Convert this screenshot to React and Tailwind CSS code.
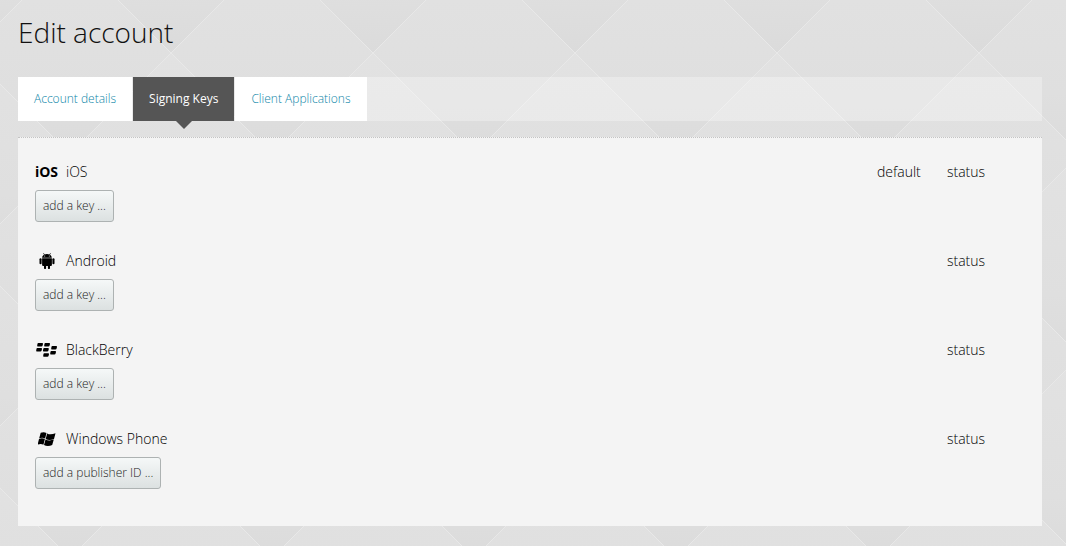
import React from "react";

const TABS = [
  { label: "Account details", active: false },
  { label: "Signing Keys", active: true },
  { label: "Client Applications", active: false },
];

function IosIcon() {
  return <span aria-hidden="true" className="text-sm leading-6 font-bold text-black">iOS</span>;
}

function AndroidIcon() {
  return (
    <svg aria-hidden="true" width="16" height="16" viewBox="0 0 16 16" fill="#000">
      <path d="M4.2.4l.5-.3.9 1.3A5.2 5.2 0 0 1 8 .9c.9 0 1.700.2 2.400.5l.9-1.300.5.3-.9 1.400c1.100.7 1.800 1.800 1.900 2.900H3.100C3.200 3.600 3.900 2.500 5.100 1.800z" />
      <path d="M3.100 5.200h9.800v6.900a1 1 0 0 1-1 1H11v2a1.050 1.050 0 0 1-2.100 0v-2H7.100v2a1.050 1.050 0 0 1-2.100 0v-2h-.9a1 1 0 0 1-1-1z" />
      <rect x=".5" y="5.200" width="2.100" height="6" rx="1.050" />
      <rect x="13.400" y="5.200" width="2.100" height="6" rx="1.050" />
      <circle cx="5.700" cy="3.100" r=".5" fill="#f4f4f4" />
      <circle cx="10.300" cy="3.100" r=".5" fill="#f4f4f4" />
    </svg>
  );
}

const BERRY = "M1.100 0h3.900q1 0 .8 1l-.4 1.500q-.2.900-1.200.9H.6q-.8 0-.6-.9L.3.8Q.4 0 1.100 0z";

function BlackBerryIcon() {
  const spots = [[1.2, 0], [8.2, 0], [0.2, 5], [7, 5], [15.2, 3], [14.2, 8], [7.2, 10.3]];
  return (
    <svg aria-hidden="true" width="22" height="14" viewBox="0 0 22 14" fill="#000">
      {spots.map(([x, y]) => (
        <path key={`${x}-${y}`} d={BERRY} transform={`translate(${x} ${y})`} />
      ))}
    </svg>
  );
}

function WindowsIcon() {
  return (
    <svg aria-hidden="true" width="18" height="14" viewBox="0 0 18 14" fill="#000">
      <path d="M2.700.8C4.600-.1 6.600-.1 8.500 1L7.100 6.500C5.200 5.400 3.200 5.400 1.200 6.300z" />
      <path d="M9.100 1.400c2 1.100 4.700 1.200 8.400-.1L16 6.900c-2.900 1.300-6 1.300-8.300 0z" />
      <path d="M1 6.900C3 6 5 6 6.900 7.100l-1.500 5.700C3.600 11.600 1.600 11.700-.4 12.700z" />
      <path d="M7.500 7.500c2.500 1.200 5.300 1.200 8.300.1l-1.600 5.300c-2.700 1.300-5.900 1.400-8.200 0z" />
    </svg>
  );
}

const PLATFORMS = [
  { name: "iOS", Icon: IosIcon, action: "add a key ...", hasDefault: true },
  { name: "Android", Icon: AndroidIcon, action: "add a key ..." },
  { name: "BlackBerry", Icon: BlackBerryIcon, action: "add a key ..." },
  { name: "Windows Phone", Icon: WindowsIcon, action: "add a publisher ID ..." },
];

function Backdrop() {
  return (
    <svg aria-hidden="true" className="absolute inset-0 -z-10 h-full w-full">
      <defs>
        <linearGradient id="facet" x1="0" y1="0" x2="0" y2="1">
          <stop offset="0" stopColor="#e2e2e2" />
          <stop offset="0.7" stopColor="#dfdfdf" />
          <stop offset="1" stopColor="#dbdbdb" />
        </linearGradient>
        <pattern id="lattice" x="171" y="53" width="202" height="202" patternUnits="userSpaceOnUse">
          <rect width="202" height="202" fill="#dfdfdf" />
          <path d="M0 0L101-101L202 0L101 101z" fill="url(#facet)" />
          <path d="M0 202L101 101L202 202L101 303z" fill="url(#facet)" />
          <path d="M-101 101L0 0L101 101L0 202z" fill="url(#facet)" />
          <path d="M101 101L202 0L303 101L202 202z" fill="url(#facet)" />
          <path d="M0 0L202 202M202 0L0 202" stroke="#e8e8e8" fill="none" />
        </pattern>
      </defs>
      <rect width="100%" height="100%" fill="url(#lattice)" />
    </svg>
  );
}

function Platform({ name, Icon, action, hasDefault }) {
  return (
    <section className="mb-[27px]">
      <div className="flex h-6 items-center text-sm leading-6 text-black">
        <span className="flex w-[23px] shrink-0 items-center justify-center">
          <Icon />
        </span>
        <h2 className="ml-2 flex-1">{name}</h2>
        {hasDefault && <span className="w-[70px]">default</span>}
        <span className="w-[78px]">status</span>
      </div>
      <button
        type="button"
        className="mt-[6px] block h-8 rounded-[3px] border border-[#adb2b2] bg-linear-to-b from-[#f5f8f8] to-[#dce1e1] px-[7px] text-xs text-[#222]"
      >
        {action}
      </button>
    </section>
  );
}

export default function App() {
  return (
    <main className="relative isolate min-h-screen px-[18px] pt-3 pb-5 pr-6 font-['Open_Sans',sans-serif] font-light text-[#222]">
      <Backdrop />
      <h1 className="text-[28px] leading-10 text-[#111]">Edit account</h1>
      <nav className="mt-[25px] flex h-11 gap-px bg-white/30">
        {TABS.map(({ label, active }) => (
          <a
            key={label}
            href="#"
            aria-current={active ? "page" : undefined}
            className={
              active
                ? "relative flex items-center bg-[#555] px-4 text-xs font-normal text-white"
                : "flex items-center bg-white px-4 text-xs text-[#0d86a8]"
            }
          >
            {label}
            {active && (
              <span className="absolute top-full left-1/2 -ml-2 border-x-8 border-t-8 border-x-transparent border-t-[#555]" />
            )}
          </a>
        ))}
      </nav>
      <div className="mt-4 border-t border-dotted border-[#c4c4c4] bg-[#f4f4f4] px-[17px] pt-[22px] pb-[10px]">
        {PLATFORMS.map((p) => (
          <Platform key={p.name} {...p} />
        ))}
      </div>
    </main>
  );
}
